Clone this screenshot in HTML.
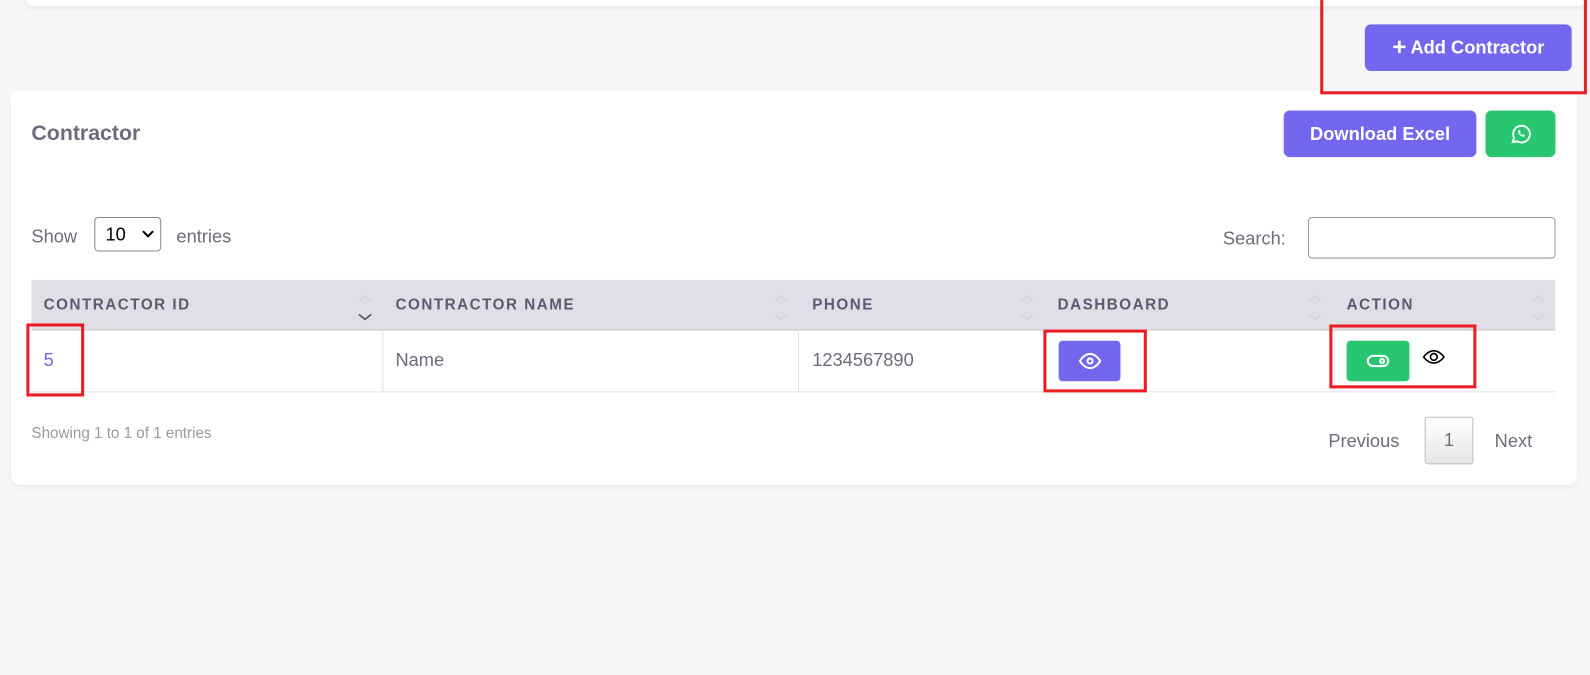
<!DOCTYPE html>
<html><head><style>
body{margin:0;width:1590px;height:675px;background:#f7f7f9;font-family:"Liberation Sans",sans-serif;overflow:hidden;color:#6e6b7b}
#w{position:absolute;left:0;top:0;width:1568px;height:666px;transform:scale(1.014);transform-origin:0 0}
.abs{position:absolute;white-space:nowrap}
.btn{position:absolute;border-radius:6px;color:#fff;font-weight:bold;display:flex;align-items:center;justify-content:center;font-size:18px}
.purple{background:#7367f0}.green{background:#28c76f}
.red{position:absolute;border:3px solid #ea1c24;box-sizing:border-box;z-index:5}
.th{position:absolute;white-space:nowrap;font-size:15px;letter-spacing:1.5px;color:#5e5873;font-weight:bold}
.sort{position:absolute}
</style></head><body><div id="w">
<div class="abs" style="left:25px;top:-10px;width:1540px;height:16px;background:#fff;border-radius:8px;box-shadow:0 2px 6px rgba(0,0,0,.08)"></div>
<div class="btn purple" style="left:1346px;top:24px;width:204px;height:46px"><span style="font-size:24px;margin-right:4px">+</span>Add Contractor</div>
<div class="abs" style="left:11px;top:89px;width:1544px;height:389px;background:#fff;border-radius:8px;box-shadow:0 2px 8px rgba(0,0,0,.05)"></div>
<div class="red" style="left:1302px;top:-3px;width:263px;height:96px"></div>
<div class="abs" style="left:31px;top:120px;font-size:21px;font-weight:bold;color:#6e6b7b">Contractor</div>
<div class="btn purple" style="left:1266px;top:109px;width:190px;height:46px">Download Excel</div>
<div class="btn green" style="left:1465px;top:109px;width:69px;height:46px"><svg width="22" height="22" viewBox="0 0 24 24" fill="none" stroke="#fff" stroke-width="2"><path d="M3 21l1.6-4.6A9 9 0 1 1 8 20z"/><path d="M9 9c0 3 3 6 6 6l1-1.5-2-1-1 1c-1-.5-2-1.5-2.5-2.5l1-1-1-2z" fill="#fff" stroke-width="0.5"/></svg></div>
<div class="abs" style="left:31px;top:223px;font-size:18px">Show</div>
<div class="abs" style="left:93px;top:214px;width:66px;height:34px;border:1px solid #888;border-radius:4px;box-sizing:border-box;font-size:18px;color:#000;padding:6px 10px">10 <svg style="position:absolute;right:6px;top:12px" width="12" height="8" viewBox="0 0 12 8" fill="none" stroke="#000" stroke-width="2"><path d="M1 1l5 5 5-5"/></svg></div>
<div class="abs" style="left:174px;top:223px;font-size:18px">entries</div>
<div class="abs" style="left:1206px;top:225px;font-size:18px">Search:</div>
<div class="abs" style="left:1290px;top:214px;width:244px;height:41px;border:1px solid #999;border-radius:4px;box-sizing:border-box"></div>
<div class="abs" style="left:31px;top:276px;width:1503px;height:49px;background:#e0dfe5;border-bottom:1px solid #ccc"></div>
<div class="abs" style="left:31px;top:325px;width:1503px;height:61px;border-bottom:1px solid #e0e0e0"></div>
<div class="abs" style="left:377px;top:276px;width:1px;height:110px;background:#e3e3e3"></div>
<div class="abs" style="left:787px;top:276px;width:1px;height:110px;background:#e3e3e3"></div>
<div class="abs" style="left:1030px;top:276px;width:1px;height:110px;background:#e3e3e3"></div>
<div class="abs" style="left:1315px;top:276px;width:1px;height:110px;background:#e3e3e3"></div>
<div class="th" style="left:43px;top:292px">CONTRACTOR ID</div>
<div class="th" style="left:390px;top:292px">CONTRACTOR NAME</div>
<div class="th" style="left:801px;top:292px">PHONE</div>
<div class="th" style="left:1043px;top:292px">DASHBOARD</div>
<div class="th" style="left:1328px;top:292px">ACTION</div>
<svg class="sort" style="left:352px;top:290px" width="16" height="30" viewBox="0 0 16 30" fill="none" stroke-width="1.6"><path d="M2 7l6-5 6 5" stroke="#d4d4d8"/><path d="M2 20l6 5 6-5" stroke="#555"/></svg>
<svg class="sort" style="left:762px;top:290px" width="16" height="30" viewBox="0 0 16 30" fill="none" stroke="#d4d4d8" stroke-width="1.6"><path d="M2 7l6-5 6 5M2 20l6 5 6-5"/></svg>
<svg class="sort" style="left:1005px;top:290px" width="16" height="30" viewBox="0 0 16 30" fill="none" stroke="#d4d4d8" stroke-width="1.6"><path d="M2 7l6-5 6 5M2 20l6 5 6-5"/></svg>
<svg class="sort" style="left:1289px;top:290px" width="16" height="30" viewBox="0 0 16 30" fill="none" stroke="#d4d4d8" stroke-width="1.6"><path d="M2 7l6-5 6 5M2 20l6 5 6-5"/></svg>
<svg class="sort" style="left:1509px;top:290px" width="16" height="30" viewBox="0 0 16 30" fill="none" stroke="#d4d4d8" stroke-width="1.6"><path d="M2 7l6-5 6 5M2 20l6 5 6-5"/></svg>
<div class="abs" style="left:43px;top:345px;font-size:18px;color:#7367f0">5</div>
<div class="abs" style="left:390px;top:345px;font-size:18px">Name</div>
<div class="abs" style="left:801px;top:345px;font-size:18px">1234567890</div>
<div class="btn purple" style="left:1044px;top:336px;width:61px;height:40px;border-radius:4px"><svg width="24" height="24" viewBox="0 0 24 24" fill="none" stroke="#fff" stroke-width="2"><path d="M2 12s4-7 10-7 10 7 10 7-4 7-10 7S2 12 2 12z"/><circle cx="12" cy="12" r="2.5"/></svg></div>
<div class="btn green" style="left:1328px;top:336px;width:62px;height:40px;border-radius:4px"><svg width="24" height="24" viewBox="0 0 24 24" fill="none" stroke="#fff" stroke-width="2"><rect x="2" y="7" width="20" height="10" rx="5"/><circle cx="16" cy="12" r="2"/></svg></div>
<svg class="abs" style="left:1402px;top:340px" width="24" height="24" viewBox="0 0 24 24" fill="none" stroke="#000" stroke-width="1.6"><path d="M2 12s4-6 10-6 10 6 10 6-4 6-10 6S2 12 2 12z"/><circle cx="12" cy="12" r="3.3"/></svg>
<div class="red" style="left:26px;top:319px;width:57px;height:72px"></div>
<div class="red" style="left:1029px;top:325px;width:102px;height:62px"></div>
<div class="red" style="left:1311px;top:320px;width:145px;height:63px"></div>
<div class="abs" style="left:31px;top:419px;font-size:15px;color:#999">Showing 1 to 1 of 1 entries</div>
<div class="abs" style="left:1310px;top:425px;font-size:18px">Previous</div>
<div class="abs" style="left:1405px;top:411px;width:48px;height:47px;box-sizing:border-box;border:1px solid #bbb;border-radius:3px;background:linear-gradient(#fff,#e6e6e6);font-size:18px;text-align:center;line-height:45px">1</div>
<div class="abs" style="left:1474px;top:425px;font-size:18px">Next</div>
</div></body></html>
